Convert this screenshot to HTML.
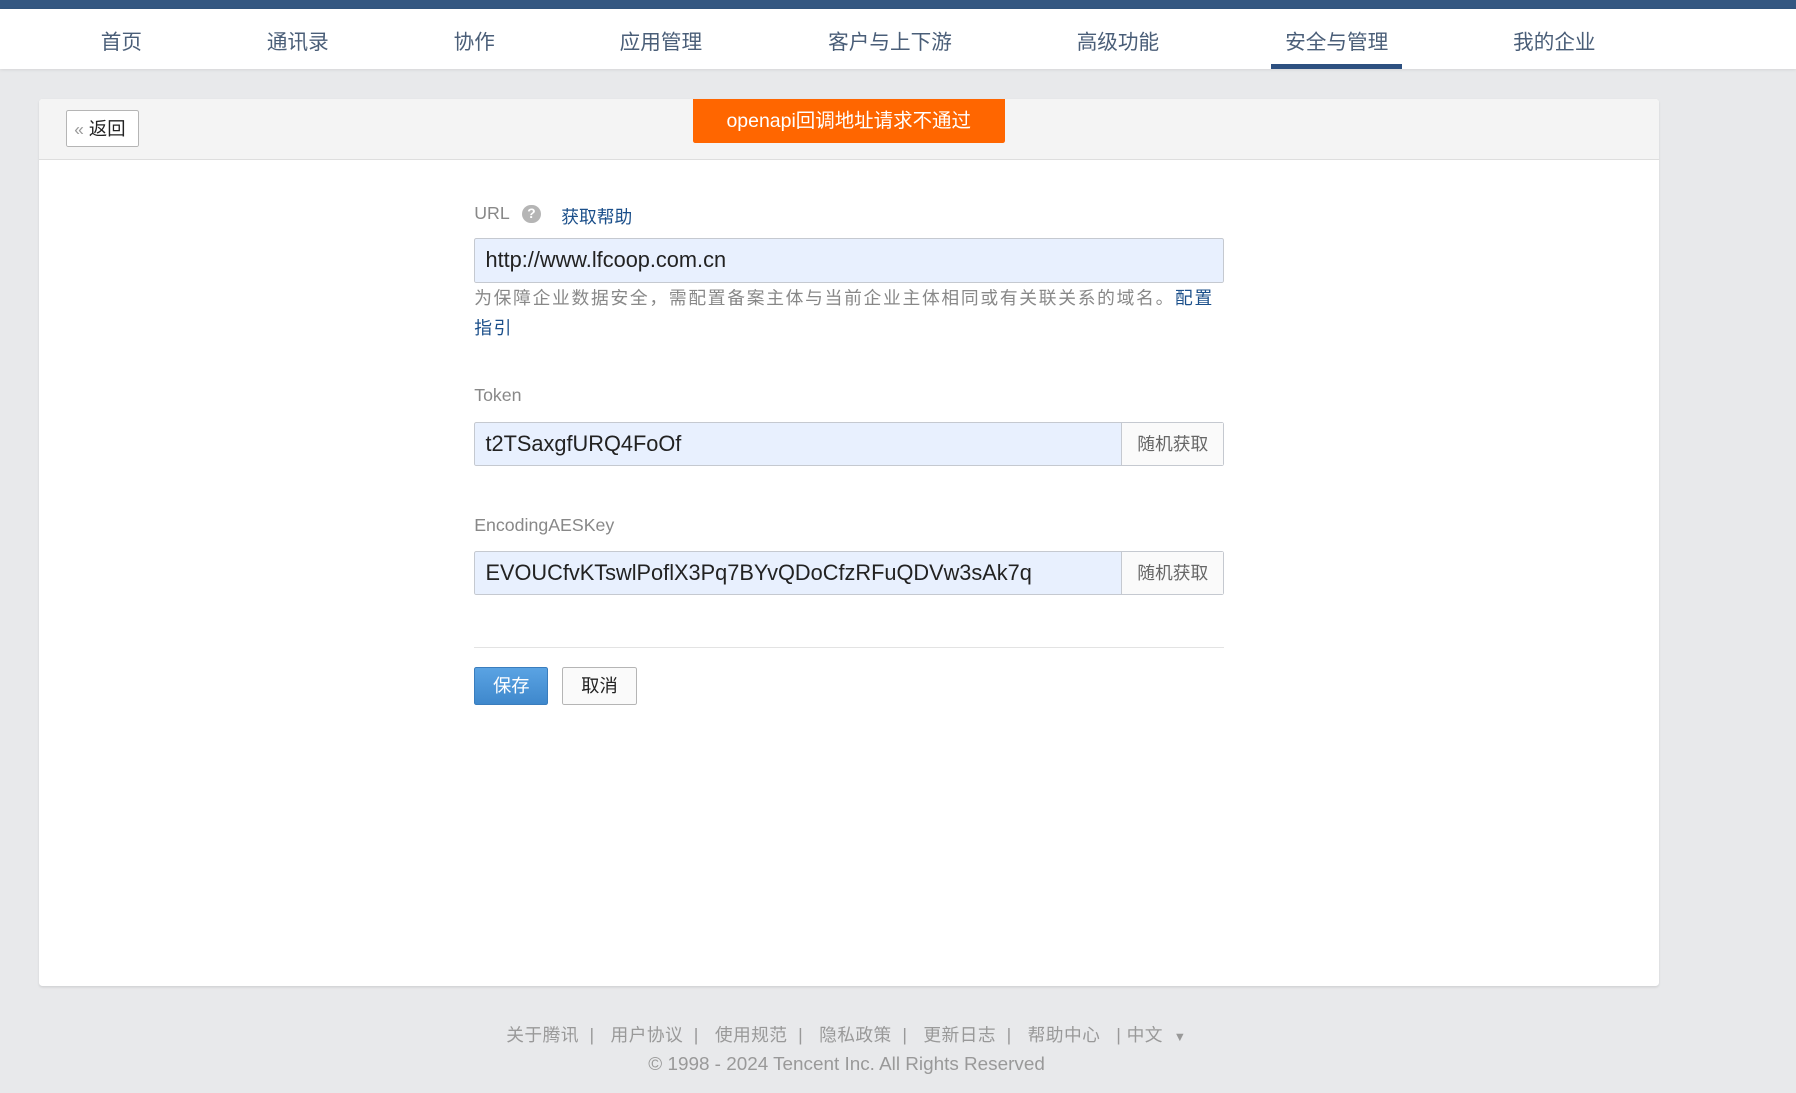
<!DOCTYPE html>
<html><head><meta charset="utf-8"><style>
html,body{margin:0;padding:0;}
body{width:1568px;height:954px;zoom:1.14541;background:#e8e9eb;position:relative;overflow:hidden;font-family:"Liberation Sans","Noto Sans CJK SC",sans-serif;}
.a{position:absolute;white-space:nowrap;}
#top{left:0;top:0;width:1568px;height:8px;background:#345781;}
#nav{left:0;top:8px;width:1568px;height:52px;background:#fff;box-shadow:0 1px 3px rgba(0,0,0,.1);}
.ni{top:22px;font-size:18px;color:#4a5e78;transform:translateX(-50%);}
#ul{left:1110px;top:56px;width:114px;height:4px;background:#2d5080;}
#card{left:34px;top:86px;width:1414px;height:775px;background:#fff;border-radius:3px;box-shadow:0 1px 2px rgba(0,0,0,.1);}
#hd{left:34px;top:86px;width:1414px;height:53px;background:#f4f4f4;border-bottom:1px solid #dedede;border-radius:3px 3px 0 0;}
#back{left:58px;top:96px;width:62px;height:31px;border:1px solid #b5b5b5;border-radius:2px;background:#fff;font-size:16px;color:#222;line-height:31px;}
#ban{left:605px;top:86px;width:272px;height:39px;background:#ff6600;color:#fff;font-size:17px;line-height:39px;text-align:center;border-radius:0 0 2px 2px;}
.lb{font-size:15.5px;color:#888;}
.inp{left:414px;width:653px;height:37px;border:1px solid #c5c9d0;background:#e8f0fe;border-radius:2px;font-size:19px;color:#222;line-height:37px;}
.inp span{position:absolute;left:9px;}
.btn{position:absolute;right:0;top:0;width:88px;height:37px;border-left:1px solid #c5c9d0;background:#fafafa;color:#666;font-size:15.5px;text-align:center;line-height:37px;}
.ft{font-size:15.5px;color:#999;}
</style></head><body>
<div class="a" id="top"></div>
<div class="a" id="nav"></div>
<div class="a ni" style="left:106px">首页</div>
<div class="a ni" style="left:260px">通讯录</div>
<div class="a ni" style="left:414px">协作</div>
<div class="a ni" style="left:577px">应用管理</div>
<div class="a ni" style="left:777px">客户与上下游</div>
<div class="a ni" style="left:976px">高级功能</div>
<div class="a ni" style="left:1167px">安全与管理</div>
<div class="a ni" style="left:1357px">我的企业</div>
<div class="a" id="ul"></div>
<div class="a" id="card"></div>
<div class="a" id="hd"></div>
<div class="a" id="back"><span style="color:#999;margin-left:6px;font-size:15px">«</span> 返回</div>
<div class="a" id="ban">openapi回调地址请求不通过</div>

<div class="a lb" style="left:414px;top:177px">URL</div>
<div class="a" style="left:456px;top:179px;width:16px;height:16px;border-radius:50%;background:#b5b5b5;color:#fff;font-size:12px;font-weight:bold;text-align:center;line-height:16px">?</div>
<div class="a" style="left:490px;top:177px;font-size:15.5px;color:#1b4f8a">获取帮助</div>
<div class="a inp" style="top:208px"><span>http://www.lfcoop.com.cn</span></div>
<div class="a lb" style="left:414px;top:248px;white-space:normal;width:660px;line-height:26px;letter-spacing:1.5px">为保障企业数据安全，需配置备案主体与当前企业主体相同或有关联关系的域名。<span style="color:#1b4f8a">配置指引</span></div>

<div class="a lb" style="left:414px;top:336px">Token</div>
<div class="a inp" style="top:368px"><span>t2TSaxgfURQ4FoOf</span><div class="btn">随机获取</div></div>

<div class="a lb" style="left:414px;top:450px">EncodingAESKey</div>
<div class="a inp" style="top:481px"><span>EVOUCfvKTswlPoflX3Pq7BYvQDoCfzRFuQDVw3sAk7q</span><div class="btn">随机获取</div></div>

<div class="a" style="left:414px;top:565px;width:655px;height:1px;background:#e3e3e3"></div>
<div class="a" style="left:414px;top:582px;width:63px;height:32px;background:linear-gradient(#5aa3e3,#3f88cc);border:1px solid #3a7dbd;border-radius:2px;color:#fff;font-size:16px;text-align:center;line-height:32px">保存</div>
<div class="a" style="left:491px;top:582px;width:63px;height:32px;background:#fafafa;border:1px solid #b5b5b5;border-radius:2px;color:#222;font-size:16px;text-align:center;line-height:32px">取消</div>

<div class="a ft" style="left:442px;top:891px;letter-spacing:0.35px">关于腾讯&nbsp;&nbsp;|&nbsp;&nbsp;&nbsp;用户协议&nbsp;&nbsp;|&nbsp;&nbsp;&nbsp;使用规范&nbsp;&nbsp;|&nbsp;&nbsp;&nbsp;隐私政策&nbsp;&nbsp;|&nbsp;&nbsp;&nbsp;更新日志&nbsp;&nbsp;|&nbsp;&nbsp;&nbsp;帮助中心&nbsp;&nbsp;&nbsp;|&nbsp;中文&nbsp;&nbsp;<span style="font-size:11px">▼</span></div>
<div class="a ft" style="left:566px;top:920px;font-size:16.5px">© 1998 - 2024 Tencent Inc. All Rights Reserved</div>
</body></html>
